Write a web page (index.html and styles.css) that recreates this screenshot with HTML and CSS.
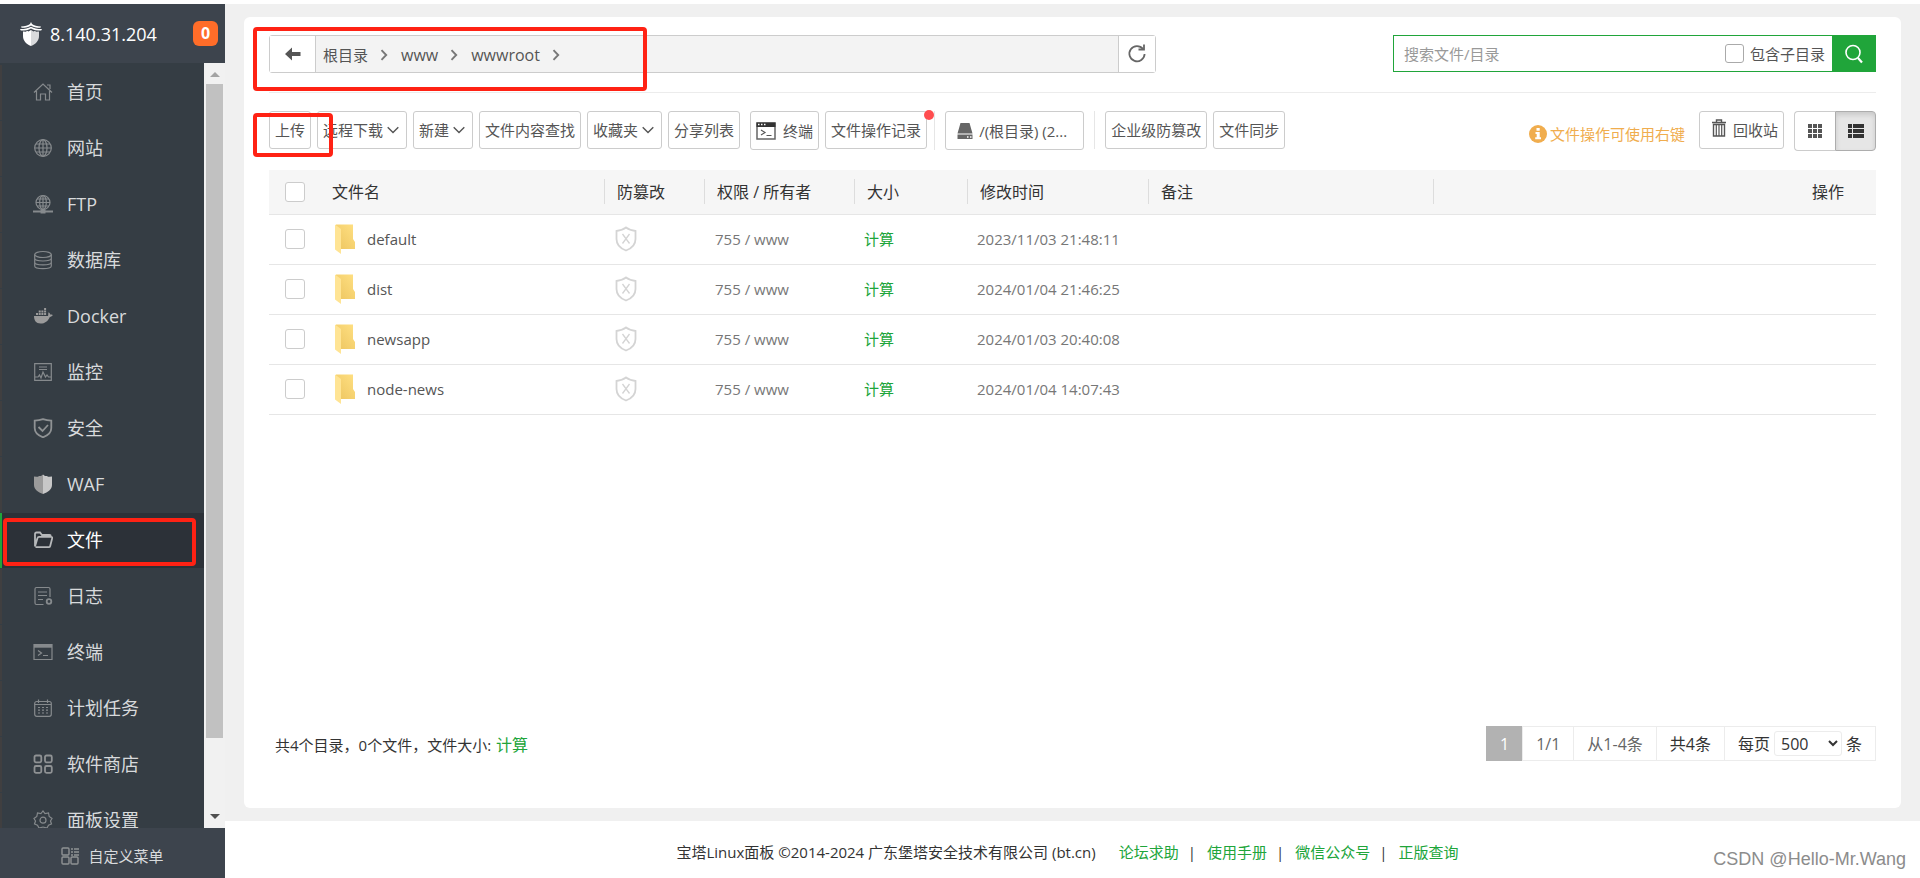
FILE: index.html
```html
<!DOCTYPE html>
<html lang="zh-CN">
<head>
<meta charset="utf-8">
<title>文件 - 宝塔Linux面板</title>
<link rel="stylesheet" href="styles.css">
</head>
<body>
<svg class="defs" aria-hidden="true">
  <defs>
    <linearGradient id="fold" x1="0" y1="1" x2="1" y2="0"><stop offset="0" stop-color="#edc55f"/><stop offset="1" stop-color="#ffe083"/></linearGradient>
  </defs>
  <symbol id="i-folder" viewBox="0 0 20 30"><path d="M1 0.500H18V15l2 3v7H1z" fill="url(#fold)"/><path d="M0 0.500L6 5v25L0 25.500z" fill="#ffe494"/></symbol>
  <symbol id="i-shield" viewBox="0 0 22 26"><path d="M11 1.500C8.500 3.500 5 4.500 1.500 5V13c0 5.500 4 9.500 9.500 11.500C16.500 22.500 20.500 18.500 20.500 13V5C17 4.500 13.500 3.500 11 1.500z" fill="none" stroke="#d4d4d4" stroke-width="1.800"/><path d="M7.500 8l7 9.500M14.500 8l-7 9.500" stroke="#d4d4d4" stroke-width="1.300"/></symbol>
  <symbol id="i-down" viewBox="0 0 12 8"><path d="M0.700 1.200L6 6.600 11.300 1.200" fill="none" stroke="#555" stroke-width="1.400"/></symbol>
  <symbol id="i-right" viewBox="0 0 8 12"><path d="M1.500 1.200L6.200 6 1.500 10.800" fill="none" stroke="#777" stroke-width="1.900"/></symbol>
</svg>
<div class="app">
  <aside class="sidebar">
    <header class="host">
      <svg class="logo" viewBox="0 0 22 24" fill="#fff"><path d="M11 0l1 2c2 1.600 5 2.500 9 2.500l-.6 1.200C16 5.700 13 5 11 3.400 9 5 6 5.700 1.600 5.700L1 4.500C5 4.500 8 3.600 10 2z"/><path d="M11 4.800c3 1.800 6 2.300 11 2.300l-.8 1.500C17 8.600 13.500 8 11 6.400 8.500 8 5 8.600.8 8.600L0 7.100c5 0 8-.5 11-2.300z"/><path d="M3 9.500l3 .300 1-1.100 1.500.8L11 8v16C6 22 3 18.500 3 14z"/><path d="M11 8l2.500 1.500 1.500-.8 1 1.100 3-.300V14c0 4.500-3 8-8 10z" fill="#d9dadc"/></svg>
      <span class="host-ip">8.140.31.204</span>
      <span class="host-count">0</span>
    </header>
    <div class="menu-wrap">
      <nav class="menu">
        <a href="#"><svg viewBox="0 0 20 20"><path d="M1 10.500L10 2l9 8.500M3.500 9v9h4v-6h5v6h4V9M14 3h3v4"/></svg>首页</a>
        <a href="#"><svg viewBox="0 0 20 20"><circle cx="10" cy="10" r="8.300"/><ellipse cx="10" cy="10" rx="4" ry="8.300"/><path d="M10 1.700v16.600M1.700 10h16.600M3 6h14M3 14h14"/></svg>网站</a>
        <a href="#"><svg viewBox="0 0 20 20"><circle cx="10" cy="8.500" r="7"/><ellipse cx="10" cy="8.500" rx="3.300" ry="7"/><path d="M10 1.500v14M3 8.500h14M4 5h12M4 12h12"/><path d="M0 17.500h20" stroke-width="2"/><path d="M7.500 17.500h5" stroke-width="4"/></svg>FTP</a>
        <a href="#"><svg viewBox="0 0 20 20"><ellipse cx="10" cy="4.500" rx="8.300" ry="3"/><path d="M1.700 4.500V16c0 1.500 3 2.700 8.300 2.700s8.300-1.200 8.300-2.700V4.500M1.700 8.300c0 1.500 3 2.700 8.300 2.700s8.300-1.200 8.300-2.700M1.700 12.200c0 1.500 3 2.700 8.300 2.700s8.300-1.200 8.300-2.700"/></svg>数据库</a>
        <a href="#"><svg class="solid" viewBox="0 0 20 20"><path d="M1 10h14c.5-1.500 0-2.500.5-3.800 1 .500 1.600 1.300 1.700 2.300 1 0 2 .100 2.600.600-.5 1.200-1.600 1.700-3 1.800C15 15 12 17.500 7.500 17.500 3 17.500 1 14.500 1 10zM3 7h2v2H3zM5.700 7h2v2h-2zM8.400 7h2v2h-2zM11.100 7h2v2h-2zM5.700 4.500h2v2h-2zM8.400 4.500h2v2h-2zM11.100 4.500h2v2h-2zM11.100 2h2v2h-2z"/></svg>Docker</a>
        <a href="#"><svg viewBox="0 0 20 20"><path d="M1.700 1.700h16.600v16.600H1.700zM6 5h8M6 7.500h8M2 15h3l1.500-2L8 16l2-6 2.500 5 1.500-2 1.500 2H18"/></svg>监控</a>
        <a href="#"><svg class="bold" viewBox="0 0 20 20"><path d="M10 1.200C7.500 2 5 2.500 1.700 2.700V10c0 4.500 3.500 7.500 8.300 9.300 4.800-1.800 8.300-4.800 8.300-9.300V2.700C15 2.500 12.500 2 10 1.200zM5.500 9l4 4L15 7"/></svg>安全</a>
        <a href="#"><svg class="solid" viewBox="0 0 20 20"><path d="M10 0.500L8 2H6L5 2.800H3.500L1 2.500V11c0 4 4 7.500 9 9z"/><path d="M10 .500L12 2h2l1 .800h1.500L19 2.500V11c0 4-4 7.500-9 9z" fill="#c8c8c8"/></svg>WAF</a>
        <a href="#" class="active"><svg class="bold" viewBox="0 0 20 20"><path d="M2 16.500V4c0-1 .5-1.500 1.500-1.500H7L9 5h7.500c1 0 1.300.500 1.300 1.500M2 16.500L4.500 8c.2-.800.8-1.200 1.500-1.200h12c1 0 1.400.700 1.200 1.500l-2 7.700c-.2.800-.7 1.200-1.500 1.200H2.500"/></svg>文件</a>
        <a href="#"><svg viewBox="0 0 20 20"><path d="M10.500 18.500H3.500c-1 0-1.500-.500-1.500-1.500V3c0-1 .5-1.500 1.500-1.500h12c1 0 1.500.500 1.500 1.500v8M5 6h9M5 9.500h9M5 13.500h5"/><circle cx="16" cy="15.500" r="2.300" stroke-width="1.800"/></svg>日志</a>
        <a href="#"><svg viewBox="0 0 20 20"><path d="M1 2.500h18v15H1z"/><path d="M1 4.200h18" stroke-width="3"/><path d="M5 8.500l3.500 2.500L5 13.500M10 13.500h5"/></svg>终端</a>
        <a href="#"><svg viewBox="0 0 20 20"><rect x="1.700" y="3.500" width="16.600" height="14.800" rx="2"/><path d="M2 6.500h16M5.500 1.500V5M14.500 1.500V5"/><path d="M5 9.500h10M5 12.200h10M5 15h10" stroke-dasharray="2 2"/></svg>计划任务</a>
        <a href="#"><svg class="bold" viewBox="0 0 20 20"><rect x="1.500" y="1.500" width="6.800" height="6.800" rx="1.500"/><rect x="12" y="1.500" width="6.800" height="6.800" rx="1.500"/><rect x="1.500" y="12" width="6.800" height="6.800" rx="1.500"/><rect x="12" y="12" width="6.800" height="6.800" rx="1.500"/></svg>软件商店</a>
        <a href="#"><svg viewBox="0 0 20 20"><path d="M8 3.500L10 1l2 2.500L15.500 3l.7 3.500L19 8.500 17.500 11l1 3-3 1.200L14 18l-4-1-4 1-1.500-2.800-3-1.200 1-3L1 8.500l2.800-2L4.500 3z"/><circle cx="10" cy="10.200" r="3"/></svg>面板设置</a>
      </nav>
      <div class="scrollbar" aria-hidden="true">
        <i class="arrow arrow-up"></i>
        <div class="track"><i class="thumb"></i></div>
        <i class="arrow arrow-down"></i>
      </div>
    </div>
    <a href="#" class="custom-menu"><svg viewBox="0 0 18 18"><rect x="1" y="1" width="7" height="7" rx="1"/><rect x="1" y="10" width="7" height="7" rx="1"/><rect x="10" y="10" width="7" height="7" rx="1"/><path d="M10 2h2M13 2h5M10 5h2M13 5h5M10 8h2M13 8h5"/></svg>自定义菜单</a>
    <div class="mark mark-menu"></div>
  </aside>

  <div class="content">
    <main class="stage">
      <section class="card">
        <div class="path-row">
          <div class="path-bar">
            <button class="path-back" aria-label="返回"><svg viewBox="0 0 16 14"><path d="M0 7l7-6.500V5h8.500v4H7v4.500z" fill="#555"/></svg></button>
            <div class="crumbs">
              <a href="#">根目录</a><svg><use href="#i-right"/></svg>
              <a href="#" class="crumb-dir">www</a><svg><use href="#i-right"/></svg>
              <a href="#" class="crumb-dir">wwwroot</a><svg><use href="#i-right"/></svg>
            </div>
            <button class="path-refresh" aria-label="刷新"><svg viewBox="0 0 20 20"><path d="M16 5A7.600 7.600 0 1 0 17.600 10" fill="none" stroke="#666" stroke-width="1.800"/><path d="M11.500 5.500H17V0.500" fill="none" stroke="#666" stroke-width="1.800"/></svg></button>
          </div>
          <form class="search">
            <input class="search-text" type="text" placeholder="搜索文件/目录" aria-label="搜索文件/目录">
            <label class="search-sub"><input class="box box-small" type="checkbox">包含子目录</label>
            <button type="button" class="search-go" aria-label="搜索"><svg viewBox="0 0 20 20"><circle cx="9" cy="8.500" r="7" fill="none" stroke="#fff" stroke-width="1.600"/><path d="M14 14l4 4.500" stroke="#fff" stroke-width="2.200"/></svg></button>
          </form>
        </div>

        <div class="toolbar">
          <div class="tools">
            <button class="btn">上传</button>
            <button class="btn">远程下载<svg class="caret"><use href="#i-down"/></svg></button>
            <button class="btn">新建<svg class="caret"><use href="#i-down"/></svg></button>
            <button class="btn">文件内容查找</button>
            <button class="btn">收藏夹<svg class="caret"><use href="#i-down"/></svg></button>
            <button class="btn">分享列表</button>
          </div>
          <div class="tools tools-system">
            <button class="btn btn-term"><svg class="term" viewBox="0 0 20 18"><path d="M1 1h18v16H1z" fill="#fff" stroke="#666" stroke-width="1.500"/><path d="M0.500 0.500h19V5h-19z" fill="#333"/><path d="M2 2.500h1.500M5 2.500h1.500M8 2.500h1.500" stroke="#fff" stroke-width="1.300"/><path d="M5 8l4 2.500L5 13M10.500 13.500h5" fill="none" stroke="#555" stroke-width="1.200"/></svg>终端</button>
            <button class="btn btn-log">文件操作记录<i class="dot"></i></button>
          </div>
          <div class="tools tools-split">
            <button class="btn btn-disk"><svg class="disk" viewBox="0 0 16 16"><path d="M3.500 0h9L15.500 10.500H.500z" fill="#666"/><path d="M.500 11.500h15V16H.500z" fill="#666"/><path d="M10 14h1.500M13 14h1.500" stroke="#fff" stroke-width="1.500"/></svg>/(根目录) (2...</button>
          </div>
          <div class="tools tools-split">
            <button class="btn">企业级防篡改</button>
            <button class="btn">文件同步</button>
          </div>
          <p class="hint"><svg viewBox="0 0 18 18"><circle cx="9" cy="9" r="9" fill="#f0ad4e"/><path d="M7.500 3h3.200v2.700H7.500zM6.500 7h4.200v5.300H12v2H6.200v-2h1.500V9H6.500z" fill="#fff"/></svg>文件操作可使用右键</p>
          <button class="btn btn-trash"><svg class="trash" viewBox="0 0 14 18"><path d="M0 3.500h14M4.500 3V1h5v2M1.500 5.500h11V17h-11z" fill="none" stroke="#555" stroke-width="1.400"/><path d="M4.300 5.500V17M7 5.500V17M9.700 5.500V17" stroke="#555" stroke-width="1.200"/></svg>回收站</button>
          <div class="views">
            <button class="view" aria-label="图标视图"><svg viewBox="0 0 16 16" fill="#555"><path d="M1 1h4v4H1zM6 1h4v4H6zM11 1h4v4h-4zM1 6h4v4H1zM6 6h4v4H6zM11 6h4v4h-4zM1 11h4v4H1zM6 11h4v4H6zM11 11h4v4h-4z"/></svg></button>
            <button class="view view-on" aria-label="列表视图"><svg viewBox="0 0 16 16" fill="#333"><path d="M0 1h4v4H0zM5 1h11v4H5zM0 6h4v4H0zM5 6h11v4H5zM0 11h4v4H0zM5 11h11v4H5z"/></svg></button>
          </div>
        </div>

        <table class="files">
          <colgroup><col class="c-check"><col class="c-name"><col class="c-lock"><col class="c-perm"><col class="c-size"><col class="c-time"><col class="c-note"><col></colgroup>
          <thead>
            <tr><th><input class="box" type="checkbox" aria-label="全选"></th><th class="th-name">文件名</th><th class="sep">防篡改</th><th class="sep">权限 / 所有者</th><th class="sep">大小</th><th class="sep">修改时间</th><th class="sep">备注</th><th class="sep th-op">操作</th></tr>
          </thead>
          <tbody>
            <tr><td><input class="box" type="checkbox" aria-label="default"></td><td><a href="#" class="file"><svg><use href="#i-folder"/></svg>default</a></td><td><svg class="shield"><use href="#i-shield"/></svg></td><td>755 / www</td><td><a href="#" class="green">计算</a></td><td>2023/11/03 21:48:11</td><td></td><td></td></tr>
            <tr><td><input class="box" type="checkbox" aria-label="dist"></td><td><a href="#" class="file"><svg><use href="#i-folder"/></svg>dist</a></td><td><svg class="shield"><use href="#i-shield"/></svg></td><td>755 / www</td><td><a href="#" class="green">计算</a></td><td>2024/01/04 21:46:25</td><td></td><td></td></tr>
            <tr><td><input class="box" type="checkbox" aria-label="newsapp"></td><td><a href="#" class="file"><svg><use href="#i-folder"/></svg>newsapp</a></td><td><svg class="shield"><use href="#i-shield"/></svg></td><td>755 / www</td><td><a href="#" class="green">计算</a></td><td>2024/01/03 20:40:08</td><td></td><td></td></tr>
            <tr><td><input class="box" type="checkbox" aria-label="node-news"></td><td><a href="#" class="file"><svg><use href="#i-folder"/></svg>node-news</a></td><td><svg class="shield"><use href="#i-shield"/></svg></td><td>755 / www</td><td><a href="#" class="green">计算</a></td><td>2024/01/04 14:07:43</td><td></td><td></td></tr>
          </tbody>
        </table>

        <div class="summary">
          <p class="totals">共4个目录，0个文件，文件大小: <a href="#" class="green">计算</a></p>
          <div class="pager">
            <span class="page-on">1</span><span class="page-dim">1/1</span><span class="page-dim">从1-4条</span><span>共4条</span>
            <label>每页<select><option>500</option></select>条</label>
          </div>
        </div>
        <div class="mark mark-path"></div>
        <div class="mark mark-upload"></div>
      </section>
    </main>
    <footer class="foot">
      <span>宝塔Linux面板 ©2014-2024 广东堡塔安全技术有限公司 (bt.cn)</span>
      <nav class="foot-links"><a href="#">论坛求助</a><i>|</i><a href="#">使用手册</a><i>|</i><a href="#">微信公众号</a><i>|</i><a href="#">正版查询</a></nav>
      <span class="credit">CSDN @Hello-Mr.Wang</span>
    </footer>
  </div>
</div>
</body>
</html>
```
FILE: styles.css
```css
* { box-sizing: border-box; }

body {
  margin: 0;
  background: #fff;
  color: #333;
  font: 15px/20px "Open Sans", "Noto Sans CJK SC", sans-serif;
}

button, input, select { font: inherit; color: inherit; margin: 0; }
button { cursor: pointer; }
a { color: inherit; text-decoration: none; }
i { font-style: normal; }
p { margin: 0; }
svg { display: block; flex: none; }
.defs { position: absolute; width: 0; height: 0; }
.green { color: #20a53a; }

.app { display: flex; height: 100vh; padding-top: 4px; }

/* Sidebar */
.sidebar {
  position: relative;
  flex: none;
  display: flex;
  flex-direction: column;
  width: 225px;
  background: #353d44;
  color: #d8dadc;
}
.host {
  display: flex;
  align-items: center;
  height: 59px;
  padding: 0 7px 4px 20px;
  background: #3d444d;
  color: #fff;
  font-size: 18px;
}
.logo { width: 22px; height: 24px; margin: 4px 8px 0 0; }
.host-ip { flex: 1; padding-top: 4px; }
.host-count {
  width: 25px;
  margin-top: 4px;
  border-radius: 6px;
  background: #ff6d29;
  font-size: 16px;
  font-weight: 700;
  line-height: 25px;
  text-align: center;
}
.menu-wrap { flex: 1; display: flex; min-height: 0; }
.menu { flex: 1; padding-top: 2px; overflow: hidden; }
.menu a {
  display: flex;
  align-items: center;
  gap: 14px;
  height: 55px;
  margin-bottom: 1px;
  padding: 0 0 2px 31px;
  border-left: 2px solid #403f40;
  font-size: 18px;
}
.menu svg { width: 20px; height: 20px; fill: none; stroke: #868a8d; stroke-width: 1.2; }
.menu svg.solid { fill: #9b9b9b; stroke: none; }
.menu svg.bold { stroke: #8f9294; stroke-width: 1.8; }
.menu .active { background: #2c3138; border-color: #20a53a; color: #fff; }
.menu .active svg { stroke: #b6b8ba; }

.scrollbar {
  display: flex;
  flex-direction: column;
  align-items: center;
  width: 21px;
  padding: 9px 0;
  background: #f1f1f1;
}
.arrow { border: 5px solid transparent; border-top-width: 0; border-bottom-width: 0; }
.arrow-up { border-bottom: 5px solid #a3a3a3; }
.arrow-down { border-top: 5px solid #505050; }
.track { flex: 1; width: 17px; margin: 7px 0; }
.thumb { display: block; height: 90.5%; background: #c1c1c1; }

.custom-menu {
  display: flex;
  align-items: center;
  justify-content: center;
  gap: 9px;
  height: 50px;
  padding-top: 5px;
  background: #3d444d;
}
.custom-menu svg { width: 18px; height: 18px; fill: none; stroke: #8f9294; stroke-width: 1.4; }

/* Red highlight frames laid over the interface */
.mark { position: absolute; border: 4px solid #ff2214; border-radius: 4px; pointer-events: none; }
.mark-menu { top: 514px; left: 3px; width: 193px; height: 48px; }
.mark-path { top: 10px; left: 9px; width: 394px; height: 64px; }
.mark-upload { top: 96px; left: 9px; width: 80px; height: 44px; }

/* Main card */
.content { flex: 1; display: flex; flex-direction: column; min-width: 0; }
.stage { flex: 1; display: flex; padding: 13px 19px; background: #f0f0f0; }
.card {
  position: relative;
  flex: 1;
  display: flex;
  flex-direction: column;
  padding: 18px 25px 47px;
  border-radius: 6px;
  background: #fff;
}

.path-row {
  display: flex;
  justify-content: space-between;
  padding-bottom: 19px;
  border-bottom: 1px solid #ececec;
}
.path-bar {
  display: flex;
  width: 55.2%;
  height: 38px;
  border: 1px solid #ccc;
  border-radius: 3px;
  background: #f3f3f3;
  color: #555;
}
.path-bar button { display: flex; align-items: center; justify-content: center; padding: 0; border: 0; background: #fff; }
.path-bar .path-back { width: 46px; border-right: 1px solid #ccc; }
.path-bar .path-refresh { width: 37px; border-left: 1px solid #ccc; }
.path-back svg { width: 16px; height: 14px; }
.path-refresh svg { width: 20px; height: 20px; }
.crumbs { flex: 1; display: flex; align-items: center; padding: 2px 0 0 7px; }
.crumb-dir { font-size: 16px; }
.crumbs svg { width: 8px; height: 12px; margin: 0 13px 0 12px; }

.search { display: flex; width: 483px; height: 37px; border: 1px solid #20a53a; }
.search-text { flex: 1; min-width: 0; padding: 1px 10px 0; border: 0; outline: 0; background: none; }
.search-text::placeholder { color: #999; opacity: 1; }
.search-sub { display: flex; align-items: center; gap: 6px; padding-right: 7px; color: #555; }
.search-go { display: flex; align-items: center; justify-content: center; width: 43px; padding: 0; border: 0; background: #20a53a; }
.search-go svg { width: 20px; height: 20px; }

.box {
  appearance: none;
  display: block;
  width: 20px;
  height: 20px;
  border: 1px solid #ccc;
  border-radius: 3px;
  background: #fff;
}
.box-small { width: 19px; height: 19px; border-color: #aaa; }

/* Toolbar */
.toolbar { display: flex; align-items: flex-start; padding: 18px 0 19px; white-space: nowrap; }
.tools { display: flex; gap: 6px; }
.tools-system { margin: 0 7px 0 10px; }
.tools-split { padding-left: 10px; margin-right: 10px; border-left: 1px solid #e6e6e6; }
.btn {
  position: relative;
  display: flex;
  align-items: center;
  height: 38px;
  padding: 0 5px;
  border: 1px solid #ccc;
  border-radius: 3px;
  background: #fff;
  color: #555;
}
.caret { width: 12px; height: 8px; margin: 0 2px 0 4px; }
.term { width: 20px; height: 18px; margin-right: 7px; }
.btn-term, .btn-disk { height: 39px; }
.dot { position: absolute; top: -2px; right: -8px; width: 10px; height: 10px; border-radius: 50%; background: #ff4d4f; }
.btn-disk { width: 139px; padding-left: 11px; }
.disk { width: 16px; height: 16px; margin-right: 6px; }
.hint { flex: 1; display: flex; justify-content: flex-end; align-items: center; gap: 3px; margin: 13px 14px 0 0; color: #f0ad4e; }
.hint svg { width: 18px; height: 18px; }
.trash { width: 14px; height: 18px; margin: 0 7px 4px 7px; }
.views { display: flex; height: 40px; margin-left: 10px; }
.view { display: flex; align-items: center; justify-content: center; width: 41px; padding: 0; border: 1px solid #ccc; border-right: 0; border-radius: 4px 0 0 4px; background: #fff; }
.view svg { width: 16px; height: 16px; }
.view-on { border: 1px solid #adadad; border-radius: 0 4px 4px 0; background: #e6e6e6; box-shadow: inset 0 3px 5px rgba(0, 0, 0, .125); }

/* File table */
.files { width: 100%; table-layout: fixed; border-collapse: collapse; color: #777; }
.c-check { width: 62px; }
.c-name { width: 273px; }
.c-lock { width: 100px; }
.c-perm { width: 150px; }
.c-size { width: 113px; }
.c-time { width: 181px; }
.c-note { width: 285px; }
.files th, .files td { padding: 0 0 0 10px; border-bottom: 1px solid #e6e6e6; text-align: left; }
.files th { height: 44px; padding-left: 13px; background: #f6f6f6; color: #333; font-size: 16px; font-weight: 400; }
.files .sep { background: linear-gradient(#ddd, #ddd) left center / 1px 25px no-repeat #f6f6f6; }
.files .th-name { padding-left: 1px; }
.files .th-op { padding-right: 32px; text-align: right; }
.files td { height: 50px; }
.files th:first-child, .files td:first-child { padding-left: 16px; }
.files td:nth-child(2) { padding-left: 4px; }
.files td:nth-child(3), .files td:nth-child(4) { padding-left: 11px; }
.file { display: flex; align-items: center; gap: 12px; color: #555; }
.file svg { width: 20px; height: 30px; }
.shield { width: 22px; height: 26px; }

/* Totals and paging */
.summary { display: flex; justify-content: space-between; align-items: center; margin-top: auto; }
.totals { padding: 3px 0 0 6px; }
.totals a { margin-left: 1px; font-size: 16px; }
.pager { display: flex; height: 35px; border: 1px solid #ececec; border-left: 0; font-size: 16px; }
.pager > * { display: flex; align-items: center; padding: 0 13px; border-left: 1px solid #ececec; }
.pager .page-dim { color: #666; }
.pager .page-on { margin: -1px 0; background: #b2b2b2; border-color: #b2b2b2; color: #fff; }
.pager select { width: 68px; height: 25px; margin: 0 4px; padding: 0 0 0 2px; border: 1px solid #ececec; border-radius: 3px; background: #fff; }

/* Footer */
.foot { position: relative; display: flex; align-items: center; justify-content: center; gap: 23px; height: 57px; padding: 4px 10px 0 0; }
.foot > span:first-child { margin-left: 0; }
.foot-links { display: flex; }
.foot-links a { color: #20a53a; }
.foot-links i { margin: 0 11px 0 9px; }
.credit { position: absolute; right: 14px; bottom: 9px; color: #8c8c8c; font: 18px/20px "Liberation Sans", sans-serif; }
```
